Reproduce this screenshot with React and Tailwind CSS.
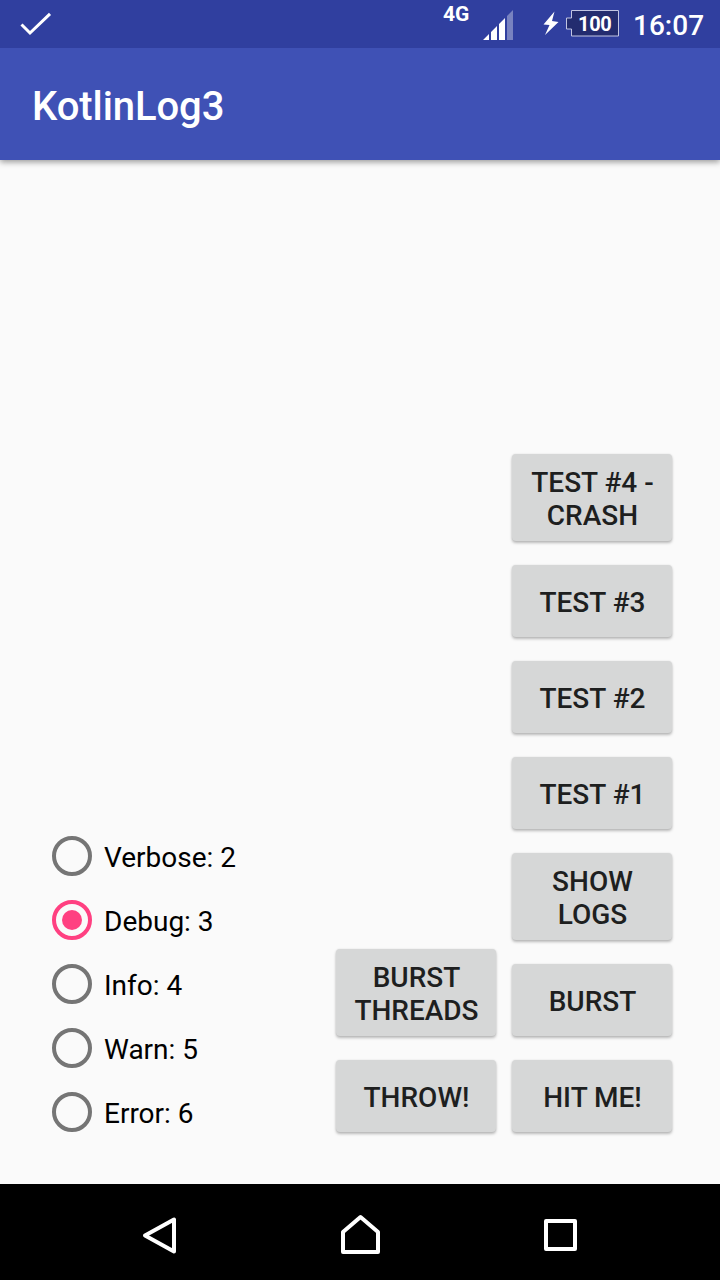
const levels = ['Verbose: 2', 'Debug: 3', 'Info: 4', 'Warn: 5', 'Error: 6'];

function StatusBar() {
  return (
    <div className="z-10 flex h-12 shrink-0 items-start bg-[#303f9f] text-white">
      <svg className="ml-5 mt-3 h-6 w-8" viewBox="0 0 32 24" fill="none" stroke="currentColor" strokeWidth="3">
        <path d="M1.5 12.5 L10 21 L30 1.8" />
      </svg>
      <div className="ml-auto flex items-start">
        <span className="mt-[2px] w-10 text-[21px] leading-6 font-bold">4G</span>
        <svg className="mt-[10px] h-[30px] w-[30px]" viewBox="0 0 30 30" fill="currentColor">
          <path d="M0 30 L6 24 V30Z M8 30 V22 L14 16 V30Z M16 30 V14 L22 8 V30Z" />
          <path d="M24 30 V6 L30 0 V30Z" fillOpacity=".35" />
        </svg>
        <svg className="mt-[11px] ml-[30px] h-6 w-4" viewBox="0 0 16 24" fill="currentColor">
          <path d="M11.5 .5 L.5 13.5 L6.5 14 L2 24 L15.5 11 L9 10Z" />
        </svg>
        <div className="relative ml-[7px] mt-[10px] h-[27px] w-[53px]">
          <svg className="absolute inset-0 h-full w-full" viewBox="0 0 53 27">
            <path d="M5.5 .5 H52.5 V26 H5.5 V19 H.5 V8 H5.5Z" fill="#232c6f" stroke="#c1c5e2" />
          </svg>
          <span className="relative block pl-[12px] pt-[2px] text-[20px] leading-6 font-bold tracking-[-0.3px]">100</span>
        </div>
        <span className="mt-[10px] ml-[14px] w-[87px] text-[28px] leading-8 font-medium">16:07</span>
      </div>
    </div>
  );
}

function LogButton({ children, tall }) {
  return (
    <button
      className={`${tall ? 'h-[87px]' : 'h-[72px]'} flex w-40 items-center justify-center rounded-[4px] bg-[#d6d7d7] pt-[2px] pl-px text-center text-[28px] leading-[33px] font-medium text-[#1e1f1f] shadow-[0_2px_3px_rgba(0,0,0,0.26),0_0_2px_rgba(0,0,0,0.1)]`}
    >
      <span>{children}</span>
    </button>
  );
}

function Level({ label, selected }) {
  return (
    <label className="flex h-16 items-center">
      <span
        className={`flex h-10 w-10 items-center justify-center rounded-full border-4 ${selected ? 'border-[#ff4081]' : 'border-[#757575]'}`}
      >
        {selected && <span className="h-5 w-5 rounded-full bg-[#ff4081]" />}
      </span>
      <span className="ml-3 pt-1 text-[28px] leading-8 text-black">{label}</span>
    </label>
  );
}

export default function App() {
  return (
    <div className="flex h-[1280px] w-[720px] flex-col overflow-hidden bg-[#fafafa] font-['Roboto',sans-serif]">
      <StatusBar />
      <header className="flex h-28 shrink-0 items-center bg-[#3f51b5] pl-8 pt-1.5 shadow-[0_2px_6px_rgba(0,0,0,0.4)]">
        <h1 className="text-[40px] leading-[48px] font-medium tracking-[-0.08px] text-white">KotlinLog3</h1>
      </header>
      <main className="flex grow items-end pr-12 pb-[52px] pl-[52px]">
        <div className="-mb-3 flex flex-col">
          {levels.map((label, i) => (
            <Level key={label} label={label} selected={i === 1} />
          ))}
        </div>
        <div className="ml-auto flex items-end gap-4">
          <div className="flex flex-col gap-6">
            <LogButton tall>BURST<br />THREADS</LogButton>
            <LogButton>THROW!</LogButton>
          </div>
          <div className="flex flex-col gap-6">
            <LogButton tall>TEST #4 -<br />CRASH</LogButton>
            <LogButton>TEST #3</LogButton>
            <LogButton>TEST #2</LogButton>
            <LogButton>TEST #1</LogButton>
            <LogButton tall>SHOW<br />LOGS</LogButton>
            <LogButton>BURST</LogButton>
            <LogButton>HIT ME!</LogButton>
          </div>
        </div>
      </main>
      <nav className="flex h-24 shrink-0 items-center justify-center gap-40 bg-black text-white">
        <svg className="h-10 w-10 overflow-visible" viewBox="0 0 40 40" fill="none" stroke="currentColor" strokeWidth="4" strokeLinejoin="round">
          <path d="M34 7.5 V39.5 L5 23.5Z" />
        </svg>
        <svg className="h-10 w-10 overflow-visible" viewBox="0 0 40 40" fill="none" stroke="currentColor" strokeWidth="4" strokeLinejoin="round">
          <path d="M3 40 V20 L20.5 5 L38 20 V40Z" />
        </svg>
        <svg className="h-10 w-10 overflow-visible" viewBox="0 0 40 40" fill="none" stroke="currentColor" strokeWidth="4" strokeLinejoin="round">
          <path d="M6 9 H35 V37 H6Z" />
        </svg>
      </nav>
    </div>
  );
}
